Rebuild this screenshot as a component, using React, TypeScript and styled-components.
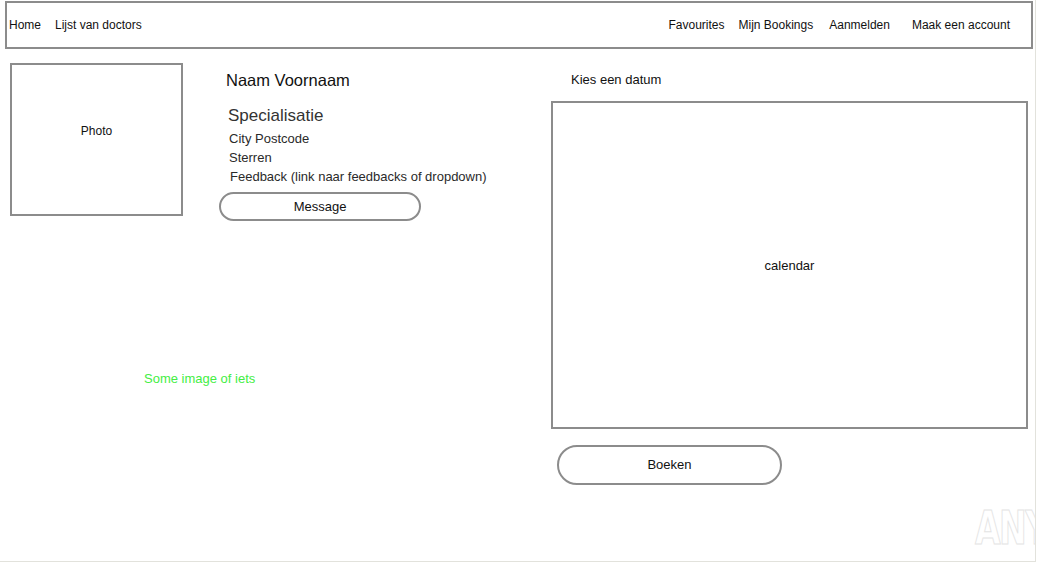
import styled, { createGlobalStyle } from "styled-components";

const GlobalStyle = createGlobalStyle`
  html, body {
    margin: 0;
    padding: 0;
    background: #ffffff;
  }
  body {
    font-family: "Liberation Sans", Arial, Helvetica, sans-serif;
    color: #111111;
  }
`;

const Frame = styled.div`
  position: relative;
  width: 1036px;
  height: 562px;
  box-sizing: border-box;
  border-right: 1px solid #e2e2dc;
  border-bottom: 1px solid #e2e2dc;
  overflow: hidden;
`;

const NavBar = styled.nav`
  display: flex;
  align-items: center;
  box-sizing: border-box;
  width: 1028px;
  height: 48px;
  margin: 1px 0 0 5px;
  padding: 0 2px;
  border: 2px solid #8c8c8c;
  font-size: 12px;
`;

const NavItem = styled.a<{ $space?: number }>`
  margin-left: ${(p) => p.$space ?? 0}px;
  color: #111111;
  text-decoration: none;
  white-space: nowrap;
`;

const Spacer = styled.div`
  flex: 1;
`;

const Main = styled.main`
  display: flex;
  margin-top: 14px;
`;

const LeftColumn = styled.section`
  width: 551px;
  display: flex;
  flex-direction: column;
`;

const ProfileRow = styled.div`
  display: flex;
  align-items: flex-start;
`;

const Photo = styled.div`
  display: flex;
  align-items: center;
  justify-content: center;
  box-sizing: border-box;
  width: 173px;
  height: 153px;
  margin-left: 10px;
  padding-bottom: 18px;
  border: 2px solid #8c8c8c;
  font-size: 12px;
`;

const Info = styled.div`
  display: flex;
  flex-direction: column;
  margin-left: 36px;
  padding-top: 7px;
`;

const Name = styled.h1`
  margin: 0 0 0 7px;
  font-size: 16.5px;
  font-weight: normal;
  line-height: 20px;
  color: #111111;
`;

const Speciality = styled.h2`
  margin: 16px 0 3px 9px;
  font-size: 17px;
  font-weight: normal;
  line-height: 20px;
  color: #333333;
`;

const Detail = styled.div<{ $indent: number }>`
  margin-left: ${(p) => p.$indent}px;
  font-size: 13px;
  line-height: 19px;
  color: #2a2a2a;
`;

const PillButton = styled.button<{ $w: number; $h: number }>`
  box-sizing: border-box;
  width: ${(p) => p.$w}px;
  height: ${(p) => p.$h}px;
  border: 2px solid #8c8c8c;
  border-radius: ${(p) => p.$h / 2}px;
  background: #ffffff;
  font-family: "Liberation Sans", Arial, sans-serif;
  font-size: 13px;
  color: #111111;
  padding: 0 0 1px;
  cursor: pointer;
`;

const MessageRow = styled.div`
  margin-top: 6px;
`;

const ImageNote = styled.div`
  margin: 150px 0 0 144px;
  font-size: 13px;
  color: #44ee44;
`;

const RightColumn = styled.section`
  display: flex;
  flex-direction: column;
`;

const DateLabel = styled.div`
  margin: 9px 0 0 20px;
  font-size: 13px;
  line-height: 16px;
`;

const Calendar = styled.div`
  display: flex;
  align-items: center;
  justify-content: center;
  box-sizing: border-box;
  width: 477px;
  height: 328px;
  margin-top: 13px;
  border: 2px solid #8c8c8c;
  font-size: 13px;
`;

const BookRow = styled.div`
  margin: 16px 0 0 6px;
`;

const Watermark = styled.div`
  position: absolute;
  right: -22px;
  bottom: 6px;
  font-family: "DejaVu Sans Condensed", "Liberation Sans Narrow", sans-serif;
  font-weight: bold;
  font-size: 46px;
  letter-spacing: -2px;
  color: #ffffff;
  -webkit-text-stroke: 1px #e4e4e4;
  transform: scaleX(0.8);
  pointer-events: none;
`;

const App = () => {
  return (
    <>
      <GlobalStyle />
      <Frame>
        <NavBar>
          <NavItem>Home</NavItem>
          <NavItem $space={14}>Lijst van doctors</NavItem>
          <Spacer />
          <NavItem>Favourites</NavItem>
          <NavItem $space={14}>Mijn Bookings</NavItem>
          <NavItem $space={16}>Aanmelden</NavItem>
          <NavItem $space={22}>Maak een account</NavItem>
          <NavItem $space={19} />
        </NavBar>
        <Main>
          <LeftColumn>
            <ProfileRow>
              <Photo>Photo</Photo>
              <Info>
                <Name>Naam Voornaam</Name>
                <Speciality>Specialisatie</Speciality>
                <Detail $indent={10}>City Postcode</Detail>
                <Detail $indent={10}>Sterren</Detail>
                <Detail $indent={11}>Feedback (link naar feedbacks of dropdown)</Detail>
                <MessageRow>
                  <PillButton $w={202} $h={29}>Message</PillButton>
                </MessageRow>
              </Info>
            </ProfileRow>
            <ImageNote>Some image of iets</ImageNote>
          </LeftColumn>
          <RightColumn>
            <DateLabel>Kies een datum</DateLabel>
            <Calendar>calendar</Calendar>
            <BookRow>
              <PillButton $w={225} $h={40}>Boeken</PillButton>
            </BookRow>
          </RightColumn>
        </Main>
        <Watermark>ANY</Watermark>
      </Frame>
    </>
  );
};

export default App;
